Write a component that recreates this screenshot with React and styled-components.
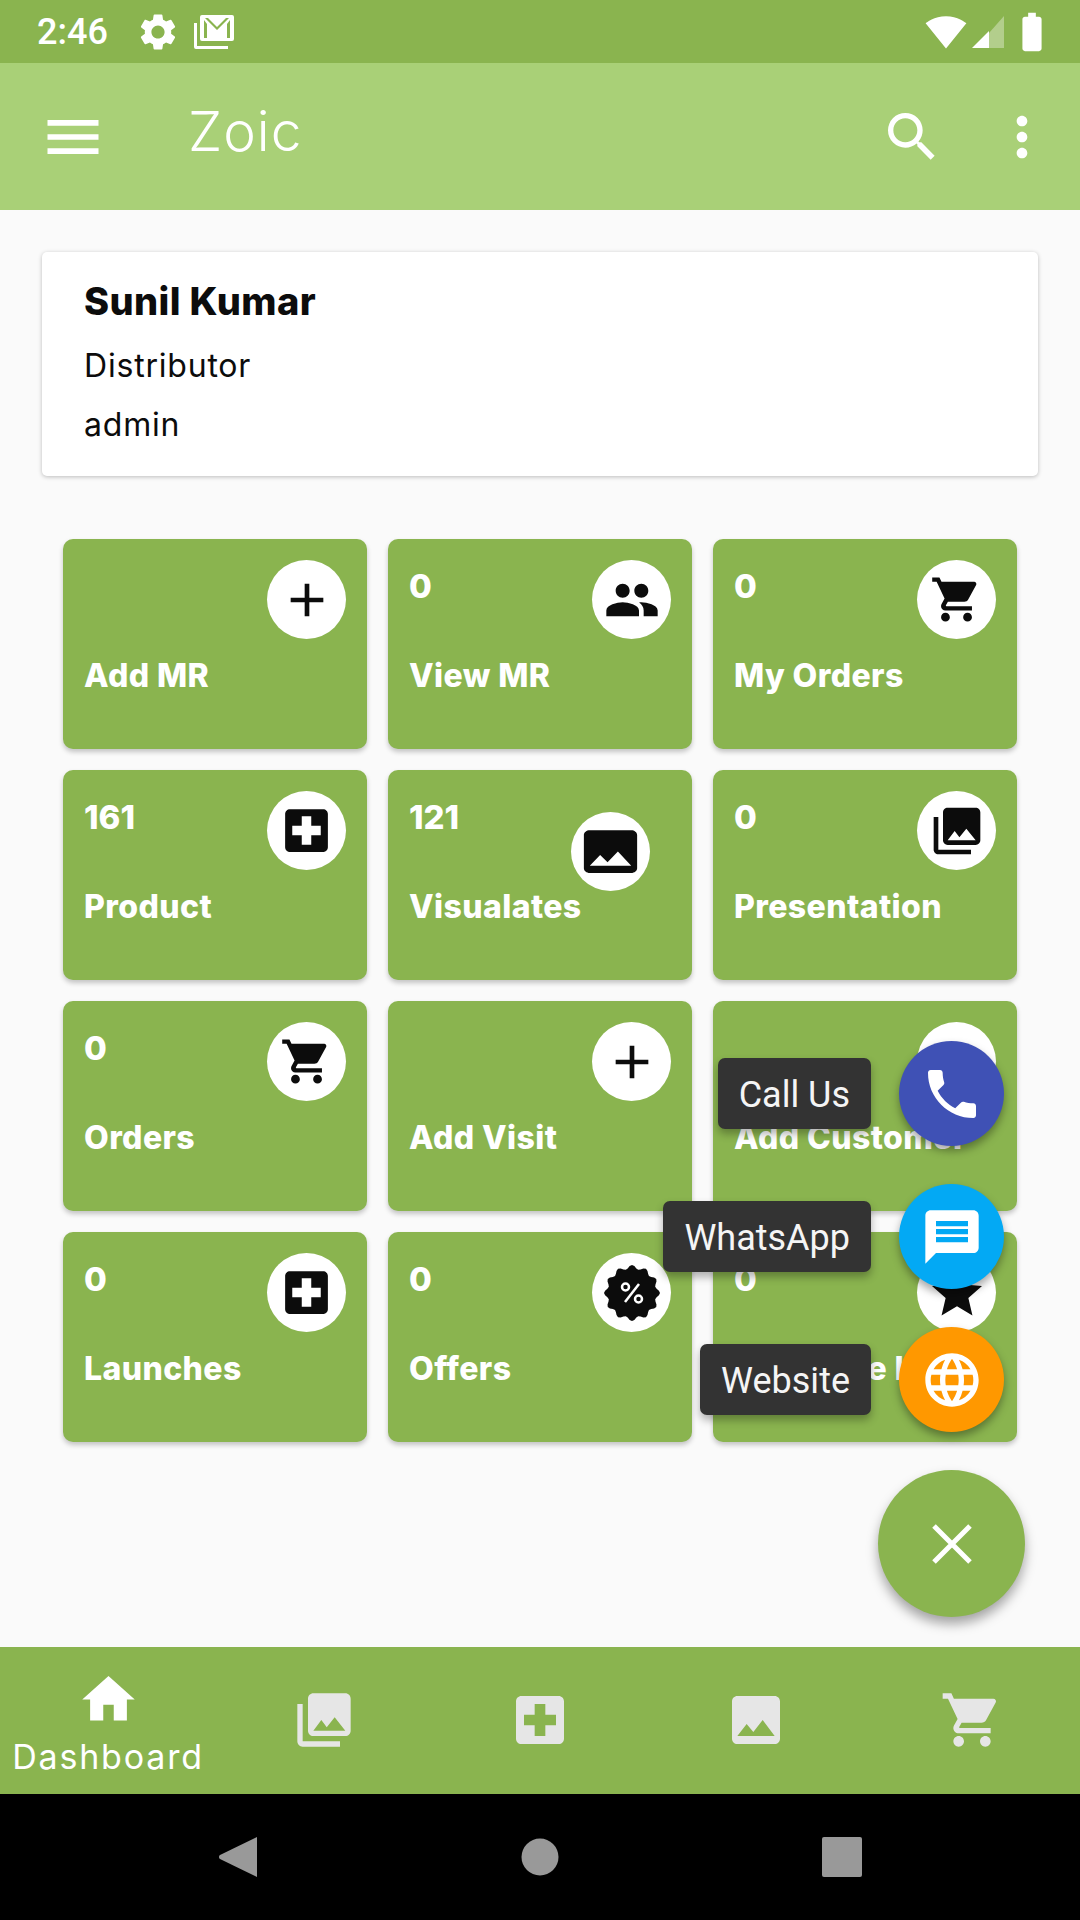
import React from 'react'
import styled, { createGlobalStyle } from 'styled-components'
import {
  MdAdd, MdHome, MdImage, MdLanguage, MdLocalHospital, MdMenu, MdMessage, MdMoreVert,
  MdPeople, MdPersonAdd, MdPhone, MdPhotoLibrary, MdSearch, MdSettings, MdShoppingCart, MdStar,
  MdSignalWifi4Bar, MdBatteryFull,
} from 'react-icons/md'

const GREEN = '#8ab44f'
const HEADING = '"Inter", "Open Sans", sans-serif'

const GlobalStyle = createGlobalStyle`
  html, body { margin: 0; padding: 0; background: #fafafa; }
  body { font-family: ${HEADING}; }
`

const Shell = styled.div`
  position: relative;
  width: 1080px;
  height: 1920px;
  display: flex;
  flex-direction: column;
  overflow: hidden;
  background: #fafafa;
`

const StatusBar = styled.div`
  height: 63px;
  flex: none;
  background: ${GREEN};
  color: #fff;
  display: flex;
  align-items: center;
  padding: 0 25px 0 37px;
`
const Time = styled.span`
  font: 500 36px "Roboto", sans-serif;
  width: 99px;
`
const StatusIcons = styled.div`
  display: flex;
  align-items: center;
  gap: ${(p) => p.$gap || 0}px;
  margin-left: ${(p) => (p.$right ? 'auto' : 0)};
`

const AppBar = styled.header`
  height: 147px;
  flex: none;
  background: #a9d077;
  color: #fff;
  display: flex;
  align-items: center;
  padding: 0 26px 0 39px;
`
const Title = styled.h1`
  margin: 0 auto 12px 81px;
  font: 300 55px ${HEADING};
  letter-spacing: 1px;
`
const BarAction = styled.div`
  display: flex;
  margin-left: ${(p) => p.$gap || 0}px;
`

const Main = styled.main`
  flex: 1;
  padding: 42px 42px 0;
`
const ProfileCard = styled.section`
  height: 224px;
  box-sizing: border-box;
  background: #fff;
  border-radius: 5px;
  box-shadow: 0 1px 4px rgba(0, 0, 0, 0.25);
  padding: 26px 42px;
  color: #0c0c0c;
`
const ProfileName = styled.div`
  font: 800 38px/46px ${HEADING};
  letter-spacing: 0.4px;
  margin-bottom: 12px;
`
const ProfileLine = styled.div`
  font: 400 32px/59px ${HEADING};
  letter-spacing: 0.8px;
`
const TileGrid = styled.div`
  display: grid;
  grid-template-columns: repeat(3, 304px);
  grid-auto-rows: 210px;
  gap: 21px;
  margin: 63px 21px 0;
`
const Tile = styled.div`
  position: relative;
  box-sizing: border-box;
  padding: 21px;
  background: ${GREEN};
  border-radius: 10px;
  box-shadow: 0 3px 5px rgba(0, 0, 0, 0.22);
  color: #fff;
`
const Count = styled.div`
  height: 52px;
  margin-bottom: 44px;
  font: 800 33px/52px ${HEADING};
`
const TileLabel = styled.div`
  font: 800 32px/40px ${HEADING};
  letter-spacing: 0.4px;
  white-space: nowrap;
`
const IconBadge = styled.div`
  position: absolute;
  top: ${(p) => (p.$low ? 42 : 21)}px;
  right: ${(p) => (p.$low ? 42 : 21)}px;
  width: 79px;
  height: 79px;
  border-radius: 50%;
  background: #fff;
  color: #0c0c0c;
  display: flex;
  align-items: center;
  justify-content: center;
`
// the picture icon is stretched inside its badge in the app
const WideImage = styled(MdImage)`
  width: 71px;
  height: 57px;
`

const BottomNav = styled.nav`
  height: 147px;
  flex: none;
  background: ${GREEN};
  display: grid;
  grid-template-columns: repeat(5, 216px);
`
const NavItem = styled.div`
  display: flex;
  flex-direction: column;
  align-items: center;
  padding-top: ${(p) => (p.$active ? 21 : 41)}px;
  color: ${(p) => (p.$active ? '#fff' : '#e6e6e6')};
`
const NavLabel = styled.span`
  margin-top: 6px;
  font: 400 34px/40px ${HEADING};
  letter-spacing: 1.8px;
  white-space: nowrap;
`

const SystemBar = styled.div`
  height: 126px;
  flex: none;
  background: #000;
  display: flex;
  align-items: center;
  justify-content: center;
  gap: 258px;
  color: #999;
`

const FabStack = styled.div`
  position: absolute;
  right: 55px;
  bottom: 303px;
  display: flex;
  flex-direction: column;
  align-items: flex-end;
  gap: 38px;
`
const FabRow = styled.div`
  display: flex;
  align-items: center;
  gap: 28px;
  padding-right: 21px;
`
const Tip = styled.span`
  height: 71px;
  box-sizing: border-box;
  padding: 2px 21px 0;
  display: flex;
  align-items: center;
  background: #333;
  border-radius: 7px;
  color: #f5f5f5;
  font: 400 36px "Roboto", sans-serif;
  box-shadow: 0 5px 9px rgba(0, 0, 0, 0.3);
`
const MiniFab = styled.div`
  width: 105px;
  height: 105px;
  border-radius: 50%;
  background: ${(p) => p.$color};
  color: #fff;
  display: flex;
  align-items: center;
  justify-content: center;
  box-shadow: 0 5px 9px rgba(0, 0, 0, 0.35);
`
const MainFab = styled(MiniFab)`
  width: 147px;
  height: 147px;
  box-shadow: 0 7px 12px rgba(0, 0, 0, 0.35);
`

// gmail style stacked envelope from the status bar
const MailIcon = () => (
  <svg width="40" height="34" viewBox="0 0 40 34" fill="currentColor">
    <path d="M0 8h3v23h31v3H2a2 2 0 0 1-2-2z" />
    <path fillRule="evenodd" d="M8 0h30a2 2 0 0 1 2 2v22a2 2 0 0 1-2 2H8a2 2 0 0 1-2-2V2a2 2 0 0 1 2-2zm3 3 12 12L35 3h-3l-9 9-9-9zm-1 2v18h3V9zm26 0-3 4v14h3z" />
  </svg>
)

const SignalIcon = () => (
  <svg width="32" height="32" viewBox="0 0 32 32">
    <path d="M32 0v32H17V17z" fill="#fff" fillOpacity="0.35" />
    <path d="M17 15v17H0z" fill="#fff" />
  </svg>
)

const CloseIcon = () => (
  <svg width="40" height="40" viewBox="0 0 40 40" fill="none" stroke="currentColor" strokeWidth="5">
    <path d="M2 2l36 36M38 2 2 38" />
  </svg>
)

const scallopPath = (() => {
  const pts = []
  for (let i = 0; i < 72; i++) {
    const a = (i / 72) * Math.PI * 2
    const r = 26 + 2 * Math.cos(a * 12)
    pts.push(`${(30 + r * Math.cos(a)).toFixed(2)} ${(30 + r * Math.sin(a)).toFixed(2)}`)
  }
  return 'M' + pts.join('L') + 'Z'
})()

const OfferIcon = () => (
  <svg width="60" height="60" viewBox="0 0 60 60">
    <path d={scallopPath} fill="currentColor" />
    <g fill="none" stroke="#fff" strokeWidth="2.5">
      <circle cx="23.5" cy="24" r="3.5" />
      <circle cx="36.5" cy="36" r="3.5" />
      <path d="M37 21 23 39" />
    </g>
  </svg>
)

const tiles = [
  { label: 'Add MR', icon: <MdAdd size={56} /> },
  { count: 0, label: 'View MR', icon: <MdPeople size={56} /> },
  { count: 0, label: 'My Orders', icon: <MdShoppingCart size={53} /> },
  { count: 161, label: 'Product', icon: <MdLocalHospital size={57} /> },
  { count: 121, label: 'Visualates', icon: <WideImage preserveAspectRatio="none" />, low: true },
  { count: 0, label: 'Presentation', icon: <MdPhotoLibrary size={56} /> },
  { count: 0, label: 'Orders', icon: <MdShoppingCart size={53} /> },
  { label: 'Add Visit', icon: <MdAdd size={56} /> },
  { label: 'Add Customer', icon: <MdPersonAdd size={52} /> },
  { count: 0, label: 'Launches', icon: <MdLocalHospital size={57} /> },
  { count: 0, label: 'Offers', icon: <OfferIcon /> },
  { count: 0, label: 'Favourite List', icon: <MdStar size={60} /> },
]

const navIcons = [MdPhotoLibrary, MdLocalHospital, MdImage, MdShoppingCart]

const fabs = [
  { tip: 'Call Us', color: '#3f51b5', icon: <MdPhone size={64} /> },
  { tip: 'WhatsApp', color: '#03a9f4', icon: <MdMessage size={64} /> },
  { tip: 'Website', color: '#ff9800', icon: <MdLanguage size={64} /> },
]

export default function App() {
  return (
    <Shell>
      <GlobalStyle />
      <StatusBar>
        <Time>2:46</Time>
        <StatusIcons $gap={14}>
          <MdSettings size={44} />
          <MailIcon />
        </StatusIcons>
        <StatusIcons $right $gap={5}>
          <MdSignalWifi4Bar size={42} />
          <SignalIcon />
          <MdBatteryFull size={46} />
        </StatusIcons>
      </StatusBar>

      <AppBar>
        <MdMenu size={68} />
        <Title>Zoic</Title>
        <BarAction><MdSearch size={64} /></BarAction>
        <BarAction $gap={46}><MdMoreVert size={64} /></BarAction>
      </AppBar>

      <Main>
        <ProfileCard>
          <ProfileName>Sunil Kumar</ProfileName>
          <ProfileLine>Distributor</ProfileLine>
          <ProfileLine>admin</ProfileLine>
        </ProfileCard>
        <TileGrid>
          {tiles.map((t) => (
            <Tile key={t.label}>
              <Count>{t.count}</Count>
              <TileLabel>{t.label}</TileLabel>
              <IconBadge $low={t.low}>{t.icon}</IconBadge>
            </Tile>
          ))}
        </TileGrid>
      </Main>

      <BottomNav>
        <NavItem $active>
          <MdHome size={63} />
          <NavLabel>Dashboard</NavLabel>
        </NavItem>
        {navIcons.map((Icon, i) => (
          <NavItem key={i}>
            <Icon size={64} />
          </NavItem>
        ))}
      </BottomNav>

      <SystemBar>
        <svg width="44" height="44" viewBox="0 0 44 44" fill="currentColor">
          <path d="M41 2v40L4 24a2.5 2.5 0 0 1 0-4z" />
        </svg>
        <svg width="44" height="44" viewBox="0 0 44 44" fill="currentColor">
          <circle cx="22" cy="22" r="18.5" />
        </svg>
        <svg width="44" height="44" viewBox="0 0 44 44" fill="currentColor">
          <rect x="2" y="2" width="40" height="40" rx="2" />
        </svg>
      </SystemBar>

      <FabStack>
        {fabs.map((f) => (
          <FabRow key={f.tip}>
            <Tip>{f.tip}</Tip>
            <MiniFab $color={f.color}>{f.icon}</MiniFab>
          </FabRow>
        ))}
        <MainFab $color={GREEN}>
          <CloseIcon />
        </MainFab>
      </FabStack>
    </Shell>
  )
}
